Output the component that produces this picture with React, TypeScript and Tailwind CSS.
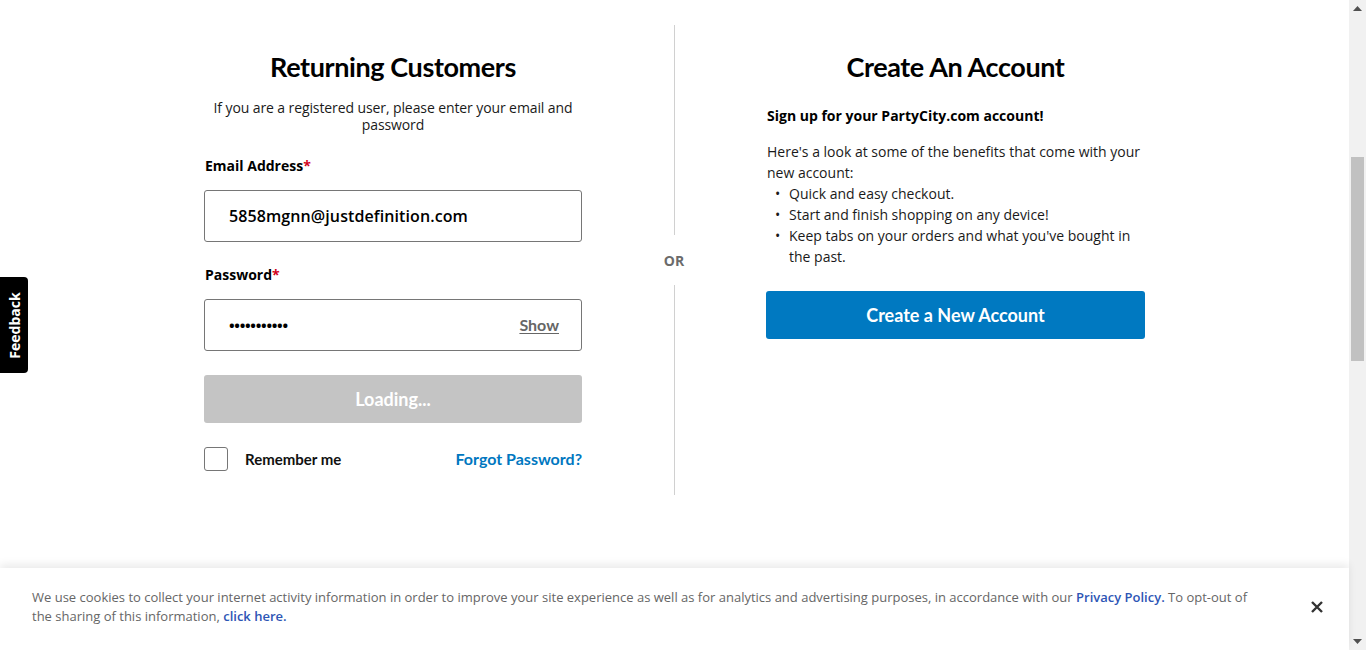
import React from "react";

const futura = { fontFamily: "Lato, 'Open Sans', sans-serif" };

export default function App() {
  return (
    <div className="relative flex h-[650px] w-[1366px] overflow-hidden bg-white text-black" style={{ fontFamily: "'Open Sans', sans-serif" }}>
      <div className="flex flex-1 justify-center pt-[25px]">
        <div className="flex">
          {/* Left column */}
          <div className="w-[378px] pt-[25px]">
            <h2 className="text-center text-[27px] leading-[34px] font-bold tracking-[-0.4px] font-['Lato',sans-serif]">Returning Customers</h2>
            <p className="mx-auto mt-[15px] w-[378px] text-center text-[14px] leading-[17px] tracking-[-0.1px] text-[#1a1a1a]">
              If you are a registered user, please enter your email and password
            </p>
            <div className="mt-[23px] pl-[1px] text-[14px] leading-[20px] font-bold">
              Email Address<span className="text-[#d0021b]">*</span>
            </div>
            <div className="mt-[14px] flex h-[52px] items-center rounded-[3px] border border-[#767676] pl-[24px] text-[16px] font-semibold tracking-[0.1px]">
              5858mgnn@justdefinition.com
            </div>
            <div className="mt-[23px] pl-[1px] text-[14px] leading-[20px] font-bold">
              Password<span className="text-[#d0021b]">*</span>
            </div>
            <div className="mt-[14px] flex h-[52px] items-center justify-between rounded-[3px] border border-[#767676] pl-[24px] pr-[22px]">
              <span className="text-[15px] font-bold tracking-[-0.3px]">•••••••••••</span>
              <span className="text-[16px] font-bold text-[#666] underline underline-offset-2" style={futura}>Show</span>
            </div>
            <div className="mt-[24px] flex h-[48px] items-center justify-center rounded-[3px] bg-[#c4c4c4] text-[18px] font-bold text-white" style={futura}>
              Loading...
            </div>
            <div className="mt-[24px] flex items-center justify-between">
              <div className="flex items-center">
                <div className="h-[24px] w-[24px] rounded-[3px] border border-[#767676]" />
                <span className="ml-[17px] text-[15px] font-bold text-[#111]" style={futura}>Remember me</span>
              </div>
              <span className="text-[16px] font-bold text-[#0077c0]" style={futura}>Forgot Password?</span>
            </div>
          </div>

          {/* Divider */}
          <div className="flex w-[184px] flex-col items-center">
            <div className="h-[210px] w-px bg-[#d0d0d0]" />
            <div className="flex h-[50px] items-center text-[14px] font-bold text-[#6b6b6b]">OR</div>
            <div className="h-[210px] w-px bg-[#d0d0d0]" />
          </div>

          {/* Right column */}
          <div className="w-[379px] pt-[25px]">
            <h2 className="text-center text-[27px] leading-[34px] font-bold tracking-[-0.4px] font-['Lato',sans-serif]">Create An Account</h2>
            <p className="mt-[23px] pl-[1px] text-[14px] leading-[17px] font-bold">Sign up for your PartyCity.com account!</p>
            <p className="mt-[17px] pl-[1px] text-[14px] leading-[21px] text-[#1a1a1a]">
              Here's a look at some of the benefits that come with your new account:
            </p>
            <ul className="pl-[1px] text-[14px] leading-[21px] text-[#1a1a1a]">
              <li className="flex"><span className="w-[22px] pl-[8px]">•</span><span>Quick and easy checkout.</span></li>
              <li className="flex"><span className="w-[22px] pl-[8px]">•</span><span>Start and finish shopping on any device!</span></li>
              <li className="flex"><span className="w-[22px] shrink-0 pl-[8px]">•</span><span>Keep tabs on your orders and what you've bought in the past.</span></li>
            </ul>
            <div className="mt-[24px] flex h-[48px] items-center justify-center rounded-[3px] bg-[#0079c1] text-[18px] font-bold text-white" style={futura}>
              Create a New Account
            </div>
          </div>
        </div>
      </div>

      {/* Scrollbar */}
      <div className="flex w-[17px] flex-col items-center bg-[#f1f1f1]">
        <div className="flex h-[17px] items-center justify-center">
          <svg width="9" height="5" viewBox="0 0 9 5"><path d="M0 5 L4.5 0 L9 5 Z" fill="#505050" /></svg>
        </div>
        <div className="mt-[140px] h-[204px] w-[13px] bg-[#c1c1c1]" />
        <div className="flex-1" />
        <div className="flex h-[17px] items-center justify-center">
          <svg width="9" height="5" viewBox="0 0 9 5"><path d="M0 0 L4.5 5 L9 0 Z" fill="#505050" /></svg>
        </div>
      </div>

      {/* Feedback tab */}
      <div className="absolute left-0 top-[277px] flex h-[96px] w-[28px] items-center justify-center rounded-r-[4px] bg-black">
        <span className="-rotate-90 whitespace-nowrap text-[14px] font-bold text-white">Feedback</span>
      </div>

      {/* Cookie banner */}
      <div className="absolute bottom-0 left-0 flex h-[82px] w-[1349px] items-start bg-white shadow-[0_-4px_8px_rgba(0,0,0,0.08)]">
        <p className="ml-[32px] mt-[20px] w-[1220px] text-[13px] leading-[19px] text-[#666]">
          We use cookies to collect your internet activity information in order to improve your site experience as well as for analytics and advertising purposes, in accordance with our{" "}
          <span className="font-semibold text-[#2d55b5]">Privacy Policy.</span> To opt-out of the sharing of this information,{" "}
          <span className="font-semibold text-[#2d55b5]">click here.</span>
        </p>
        <div className="ml-auto mr-[26px] mt-[33px]">
          <svg width="12" height="12" viewBox="0 0 12 12"><path d="M1 1 L11 11 M11 1 L1 11" stroke="#333" strokeWidth="2.4" /></svg>
        </div>
      </div>
    </div>
  );
}
